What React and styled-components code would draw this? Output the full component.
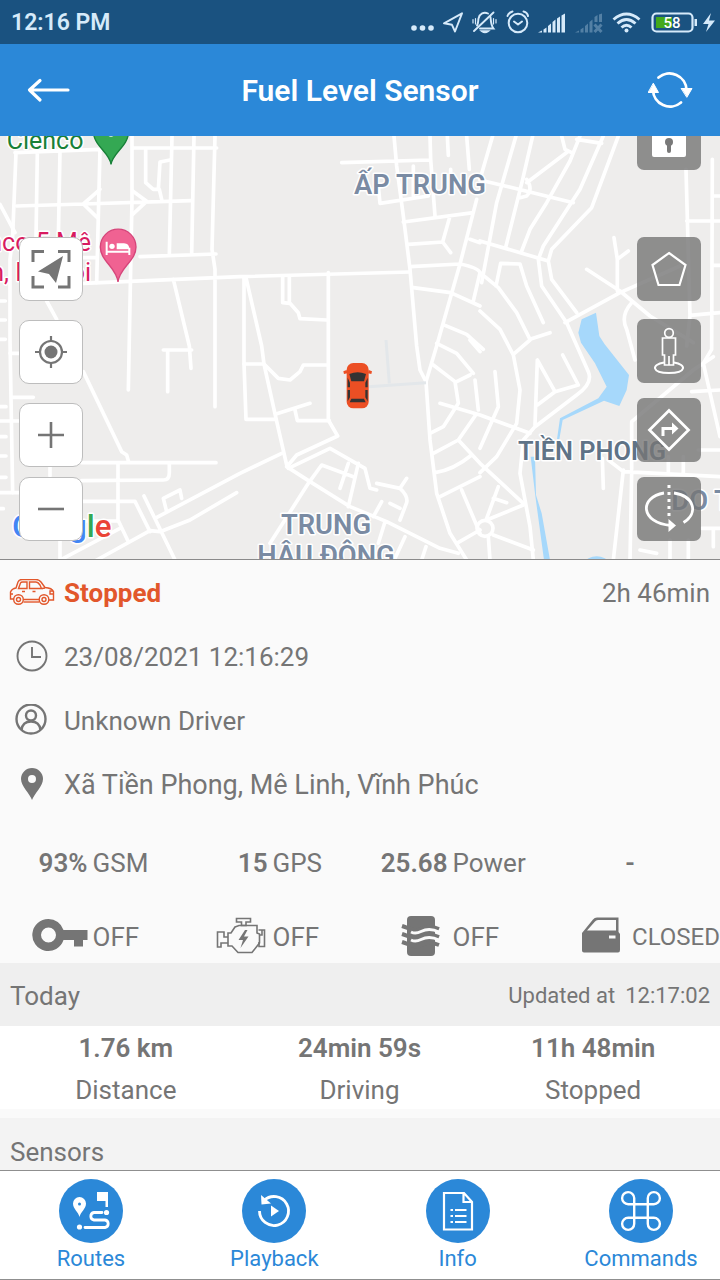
import React from 'react';
import styled, { createGlobalStyle } from 'styled-components';

const GlobalStyle = createGlobalStyle`
  * {
    box-sizing: border-box;
  }
  body {
    margin: 0;
    background: #fafafa;
    font-family: Roboto, "Noto Sans", "Liberation Sans", sans-serif;
    color: #757575;
  }
  button {
    font: inherit;
    padding: 0;
    border: 0;
    background: none;
    cursor: pointer;
  }
  svg {
    display: block;
    flex-shrink: 0;
  }
`;

const Screen = styled.div`
  display: flex;
  flex-direction: column;
  height: 100vh;
  overflow: hidden;
`;

const StatusBar = styled.div`
  flex-shrink: 0;
  display: flex;
  align-items: center;
  justify-content: space-between;
  height: 44px;
  padding: 2px 4px 0 11px;
  background: #1a5280;
  color: #d6eafa;
`;

const Clock = styled.span`
  font-size: 23px;
  font-weight: 600;
  line-height: 28px;
`;

const StatusIcons = styled.div`
  display: flex;
  gap: 8px;
`;

const Header = styled.header`
  flex-shrink: 0;
  display: flex;
  align-items: center;
  justify-content: space-between;
  height: 92px;
  padding: 0 24px;
  background: #2b88d8;
  color: #fff;
`;

const HeaderButton = styled.button`
  width: 48px;
  height: 48px;
  color: #fff;
`;

const Title = styled.h1`
  margin: 0;
  padding-top: 2px;
  font-size: 30px;
  font-weight: 600;
  line-height: 36px;
`;

const MapArea = styled.section`
  position: relative;
  flex-shrink: 0;
  height: 424px;
  overflow: hidden;
  background: #eeedec;
  border-bottom: 1px solid #8a8a8a;
`;

const MapCanvas = styled.svg`
  width: 100%;
  height: 424px;
`;

const Roads = styled.g`
  fill: none;
  stroke: #fff;
  stroke-width: 11px;
  stroke-linecap: round;
  stroke-linejoin: round;
`;

const PlaceName = styled.text`
  font-size: ${(props) => props.$size || 82}px;
  font-weight: ${(props) => props.$weight || 600};
  fill: ${(props) => props.$color || '#7a8ba3'};
  stroke: #fff;
  stroke-width: 9px;
  stroke-linejoin: round;
  paint-order: stroke;
`;

const ToolColumn = styled.div`
  position: absolute;
  bottom: 18px;
  ${(props) => props.$side}: 19px;
  display: flex;
  flex-direction: column;
`;

const ToolGroup = styled.div`
  display: flex;
  flex-direction: column;
  gap: ${(props) => props.$gap}px;
  margin-bottom: ${(props) => props.$after || 0}px;
`;

const MapButton = styled.button`
  display: flex;
  align-items: center;
  justify-content: center;
  width: 64px;
  height: 64px;
  border-radius: ${(props) => (props.$dark ? 7 : 10)}px;
  border: ${(props) => (props.$dark ? '0' : '1px solid #bdbdbd')};
  background: ${(props) => (props.$dark ? 'rgba(118, 118, 117, 0.8)' : '#fff')};
  color: ${(props) => (props.$dark ? '#fff' : '#757575')};
`;

const Details = styled.main`
  flex: 1;
  min-height: 0;
  overflow: hidden;
  font-size: 26px;
  line-height: 32px;
`;

const InfoRow = styled.div`
  display: flex;
  align-items: center;
  height: 64px;
  padding: 2px 10px 0 0;
`;

const RowIcon = styled.span`
  display: flex;
  justify-content: center;
  width: 64px;
`;

const RowText = styled.span`
  flex: 1;
  color: ${(props) => (props.$alert ? '#e2572b' : 'inherit')};
  font-size: ${(props) => (props.$address ? 27 : 26)}px;
  font-weight: ${(props) => (props.$alert ? 700 : 400)};
`;

const Readings = styled.div`
  display: grid;
  grid-template-columns: repeat(4, 1fr);
  align-items: center;
  height: ${(props) => props.$height}px;
`;

const Reading = styled.div`
  display: grid;
  grid-template-columns: 1fr 1fr;
  align-items: center;
  column-gap: 5px;
`;

const ReadingValue = styled.strong`
  justify-self: end;
  font-weight: 600;
`;

const EmptyReading = styled.span`
  text-align: center;
  font-weight: 600;
`;

const SwitchIcon = styled.span`
  justify-self: end;
`;

const SwitchState = styled.span`
  font-size: ${(props) => (props.$compact ? 24 : 26)}px;
  white-space: nowrap;
`;

const SectionHead = styled.div`
  display: flex;
  align-items: center;
  justify-content: space-between;
  height: ${(props) => props.$height}px;
  padding: 2px 10px 0;
  background: ${(props) => props.$background};
`;

const SectionTitle = styled.h2`
  margin: 0;
  font-size: 26px;
  font-weight: 400;
`;

const Updated = styled.span`
  display: flex;
  gap: 10px;
  font-size: 22px;
`;

const Stats = styled.dl`
  display: grid;
  grid-template-columns: repeat(3, 1fr);
  margin: 0 0 9px;
  padding: 1px 10px 0 9px;
  height: 83px;
  background: #fff;
  text-align: center;
`;

const Stat = styled.div`
  display: flex;
  flex-direction: column-reverse;
  justify-content: flex-end;
  line-height: 42px;
`;

const StatValue = styled.dd`
  margin: 0;
  font-weight: 600;
`;

const NavBar = styled.nav`
  flex-shrink: 0;
  display: flex;
  justify-content: space-between;
  height: 110px;
  padding-left: 12px;
  background: #fff;
  border-top: 1px solid #8f8f8f;
  border-bottom: 1px solid #8f8f8f;
`;

const NavLink = styled.a`
  display: flex;
  flex-direction: column;
  align-items: center;
  width: 158px;
  padding-top: 8px;
  font-size: 22px;
  line-height: 32px;
  color: #2b88d8;
  text-decoration: none;
`;

const NavIcon = styled.span`
  display: flex;
  align-items: center;
  justify-content: center;
  width: 64px;
  height: 64px;
  border-radius: 50%;
  background: #2b88d8;
  color: #fff;
`;

const SignalBars = ({ off }) => (
  <svg width="29" height="28" viewBox="0 0 29 28" fill="currentColor" opacity={off ? 0.3 : 1}>
    <path d="M1 23.5L5 21.5V23.5ZM6.5 20.5L9.5 18.5V23.5H6.5ZM11 17L14 14.5V23.5H11Z" />
    {off ? (
      <>
        <path d="M15.5 13L18.5 10.5V23.5H15.5ZM20.5 8L23.5 6V13H20.5ZM25 5.5L28 4.5V13H25Z" />
        <path d="M20.5 15.5L27.5 23M27.5 15.5L20.5 23" stroke="currentColor" strokeWidth="3" />
      </>
    ) : (
      <path d="M15.5 13L18.5 10.5V23.5H15.5ZM20 9.5L23 7.5V23.5H20ZM24.5 6.5L28 4.5V23.5H24.5Z" />
    )}
  </svg>
);

const PhoneStatus = () => (
  <StatusIcons>
    <svg width="24" height="28" viewBox="0 0 24 28" fill="currentColor">
      <circle cx="4" cy="19" r="2.8" />
      <circle cx="12.5" cy="19" r="2.8" />
      <circle cx="21" cy="19" r="2.8" />
    </svg>
    <svg width="21" height="28" viewBox="0 0 21 28" fill="none" stroke="currentColor" strokeWidth="1.9" strokeLinejoin="round">
      <path d="M2 14.3L20 4.3L13 22.5L10 15.8Z" />
    </svg>
    <svg width="26" height="28" viewBox="0 1 26 28" fill="none" stroke="currentColor" strokeWidth="1.9" strokeLinecap="round">
      <path d="M6 17.5C7.5 15 7 13 7.5 10.5C8.5 5.5 13 3.5 17 5.5" />
      <path d="M19.5 9C20 13 19.8 17 22.5 20.5H9" />
      <path d="M3 23L22.5 4.5" />
      <path d="M11 23.2Q14 25.5 17 23.2Z" fill="currentColor" />
      <path d="M4.500 10.5V16M2 11.500V15M22.500 10.500V16M25 11.500V15" strokeWidth="1.2" />
    </svg>
    <svg width="24" height="28" viewBox="0 1 24 28" fill="none" stroke="currentColor" strokeWidth="2" strokeLinecap="round" strokeLinejoin="round">
      <circle cx="13" cy="15" r="9.3" />
      <path d="M9 13.5L13 16.5L17 13.5" />
      <path d="M2.5 8Q3.5 4.5 7.5 3.5M23 8Q22.500 4.5 18.5 3.500" />
    </svg>
    <SignalBars />
    <SignalBars off />
    <svg width="31" height="28" viewBox="0 0 31 28" fill="none" stroke="currentColor" strokeWidth="2.9">
      <path d="M2.5 10.5Q15.5 -.5 28.5 10.5" />
      <path d="M6.5 14.5Q15.5 6.5 24.5 14.5" />
      <path d="M10.5 18.5Q15.5 14 20.5 18.5" />
      <circle cx="15.5" cy="21.5" r="2" fill="currentColor" stroke="none" />
    </svg>
    <svg width="66" height="28" viewBox="0 1 66 28">
      <rect x="2.5" y="5.500" width="40" height="18" rx="4" fill="none" stroke="currentColor" strokeWidth="2.2" />
      <rect x="6" y="9" width="16" height="11" fill="#43a91b" />
      <rect x="44.5" y="11" width="2.5" height="7" fill="currentColor" />
      <path d="M61 5L53 16H58.5L56 24L65 12.5H59Z" fill="currentColor" />
      <text x="22" y="20" textAnchor="middle" fontSize="15" fontWeight="500" fill="#fff">58</text>
    </svg>
  </StatusIcons>
);

const MapDrawing = () => (
  <MapCanvas viewBox="0 0 2160 1272" preserveAspectRatio="xMidYMid slice" role="img" aria-label="Map">
    <g fill="#a6d8fb">
      <path d="M1745 550L1788 530L1798 600L1814 625L1887 717L1880 762L1858 810L1812 794L1688 852L1678 910H1671L1680 847L1795 787L1820 752L1785 682L1743 620L1735 590Z" />
      <path d="M1592 962H1605L1608 1077L1625 1132L1650 1272H1632L1606 1080Z" />
      <ellipse cx="1790" cy="1277" rx="32" ry="16" />
    </g>
    <Roads>
      {/* north-west blocks */}
      <path d="M45 50L300 40M400 36H650M48 50L38 300L30 370V612L38 1070M112 50L108 310M180 45L175 310M300 40L290 440M396 0V190L385 762" />
      <path d="M50 210L250 204L575 194M300 160L250 204L292 245M398 165L440 196L398 235M437 40V140L460 160H478L485 190M510 72L480 78L475 160" />
      <path d="M516 0L508 355M582 0L575 355M645 0L636 340L645 400V812M420 362L648 354M250 442L720 422L1230 408M520 430L568 630L573 697M0 205L45 290M140 495L170 550M250 365H290" />
      <path d="M0 495H16M0 552H16M0 610H16M38 784H100M0 855H58M0 812H18M0 902H18M0 960H18M0 1024H18M0 1070H58M30 652H58M0 1118H10" />
      {/* south-west blocks */}
      <path d="M490 642H575M503 642V767M250 707L365 947L380 957L386 978M245 980H648M150 992V1020M508 984V1010Q508 1032 490 1032L245 1034M354 984V1152L385 1217M245 1096H405L450 1187" />
      <path d="M432 1080L525 1272M180 1212V1272M190 1267L360 1177M290 1272L450 1184L480 1187L570 1152L710 1070M465 1147L720 1012L845 952M500 1127L490 1087L540 1062L545 1087M250 1155H354" />
      {/* north centre */}
      <path d="M1025 80L1290 72M1182 0L1190 90L1210 240L1230 400L1250 630L1260 702L1278 737M1135 150L1140 202L1285 180M1290 0L1292 70L1305 240M1342 0L1345 58M1400 0L1408 100M1240 90V180M1352 100V150" />
      <path d="M1210 258L1420 230M1350 240L1328 318L1225 325M1328 318L1352 350M1230 392L1380 384Q1435 395 1440 410L1420 495M1430 190L1380 384L1310 630L1278 737M1410 310L1440 320M1240 455L1352 470L1440 510M1335 568L1400 595L1450 640" />
      <path d="M732 425V682L738 850H828M738 425L785 630L792 684L828 847L860 987M848 420V500L870 502L895 530L900 548L980 552M868 420V500M985 410V852L1013 900L890 957L865 987" />
      {/* south centre */}
      <path d="M732 684H792L835 727L870 732L900 707L910 687H982M828 834L930 802M885 822L892 854H988M865 997L990 937L1095 997L1110 1057L1130 1062" />
      <path d="M860 992L930 1037L1050 1112L1160 1157L1220 1187L1320 1237L1375 1252M810 1222L925 1042L965 987L1060 1022M1045 982L1020 1057M1075 982L1045 1112M1130 1042L1200 1057Q1225 1080 1220 1100L1200 1152M1200 1057L1220 1027M1170 1102L1200 1117M1145 1097L1120 1142M1155 1157L1135 1222M1215 1202L1185 1267M1278 1232L1265 1272" />
      <path d="M1278 737L1290 912L1310 1072L1350 1192L1400 1272M1310 622L1370 652L1420 712M1300 687L1365 737L1375 802L1330 872L1290 892M1370 737L1410 717M1320 802L1440 837L1590 892M1425 732L1435 822M1425 840L1375 912L1300 952M1375 912L1440 982L1570 1102M1415 957Q1360 1002 1305 1010M1440 1022L1320 1082M1385 1062L1440 1192M1370 1222L1440 1182M1410 612L1440 647" />
      {/* north-east blocks */}
      <path d="M1478 0L1440 130M1548 0L1490 200L1445 440M1598 0L1568 130L1518 330M1440 132L1515 150L1720 200M1685 0L1695 40L1715 50M1740 0L1710 75L1640 200L1590 280L1565 345M1730 10L1805 22M1580 140L1702 48M1580 130Q1600 160 1580 180L1560 185" />
      <path d="M1810 0L1740 160L1630 330L1615 370L1625 450L1700 560L1765 707Q1780 742 1730 777L1605 872L1570 912L1560 1012L1590 1172L1600 1272M1855 0L1775 215L1655 340L1645 375L1655 430L1730 530M1440 315L1645 375" />
      <path d="M1440 410L1495 455L1550 530L1590 610L1650 590M1488 450L1502 382L1560 384L1580 450L1630 560M1440 525L1500 580L1540 657L1560 762L1550 862L1490 962L1440 1010M1540 655L1590 612" />
      <path d="M1760 400L1860 465L1950 540L2080 620M1695 560L1860 470L2040 390M1842 305L1852 370V465M1852 370L1885 345M1895 500Q1860 540 1880 580L1905 672M2058 100L2070 540L2060 630M2137 70L2135 640L2110 682L2160 902M2060 255H2160M2137 180H2160M2137 388H2160M2070 538L2160 530" />
      {/* south-east blocks */}
      <path d="M1612 672L1605 867M1612 672L1665 767M1612 807L1665 767L1735 747L1688 657M1485 707L1495 812L1440 937M1495 1052L1460 1147M1480 1087L1520 1100M1460 1152L1570 1107M1480 1197L1600 1242M1465 1202L1470 1272" />
      <circle cx="1455" cy="1177" r="24" />
      <path d="M1807 967L1810 1057M1870 1002L1840 1272M1825 972L1870 1007L2160 1022M1895 1012L1890 1272M1895 1000V857L2080 702L2140 662M2075 767L2160 762M2095 942H2160M2005 962V1012M2050 962V1012M1920 1242L1970 1252M2010 1212V1272M2065 1212V1272M2105 1177H2160M2140 1182V1232" />
    </Roads>
    <path d="M1158 612L1168 742M1105 752L1278 740" fill="none" stroke="#e3e7ea" strokeWidth="9" />

    <path d="M333 85C330 50 280 30 280 -15A53 53 0 0 1 386 -15C386 30 338 50 333 85Z" fill="#34a853" stroke="#188038" strokeWidth="4" />
    <circle cx="333" cy="-12" r="14" fill="#fff" />
    <path d="M354 438C350 395 301 375 301 333A53 53 0 0 1 408 333C408 375 358 395 354 438Z" fill="#f06292" stroke="#d6457a" strokeWidth="4" />
    <path d="M320 317V357M320 347H388M388 357V335" stroke="#fff" strokeWidth="6" fill="none" />
    <path d="M350 340V322H372Q388 322 388 340Z" fill="#fff" />
    <circle cx="336" cy="331" r="8" fill="#fff" />
    <PlaceName x="20" y="38" $size={75} $weight={400} $color="#188038">Cienco</PlaceName>
    <PlaceName x="273" y="345" textAnchor="end" $size={75} $weight={400} $color="#d81b60">Cienco 5 Mê</PlaceName>
    <PlaceName x="273" y="435" textAnchor="end" $size={75} $weight={400} $color="#d81b60">Linh, Hà Nội</PlaceName>

    <PlaceName x="1260" y="175" textAnchor="middle">ẤP TRUNG</PlaceName>
    <PlaceName x="1776" y="972" textAnchor="middle" $size={76} $color="#5f7387">TIỀN PHONG</PlaceName>
    <PlaceName x="978" y="1194" textAnchor="middle">TRUNG</PlaceName>
    <PlaceName x="978" y="1288" textAnchor="middle">HẬU ĐÔNG</PlaceName>
    <PlaceName x="2014" y="1122">DO TH</PlaceName>
    <PlaceName x="36" y="1202" $size={94} $weight={500}>
      <tspan fill="#4285f4">G</tspan>
      <tspan fill="#ea4335">o</tspan>
      <tspan fill="#fbbc05">o</tspan>
      <tspan fill="#4285f4">g</tspan>
      <tspan fill="#34a853">l</tspan>
      <tspan fill="#ea4335">e</tspan>
    </PlaceName>

    {/* vehicle marker */}
    <g transform="translate(1030 680)">
      <path d="M10 22L0 26L2 34L12 32ZM76 22L86 26L84 34L74 32Z" fill="#ec4f24" />
      <rect x="10" y="1" width="66" height="136" rx="20" fill="#ec4f24" />
      <path d="M18 34Q43 24 68 34L62 56H24Z" fill="#333" />
      <path d="M13 45L20 60V74H13ZM73 45L66 60V74H73ZM13 82H20V104L13 116ZM73 82H66V104L73 116ZM24 108H62L67 119H19Z" fill="#333" />
    </g>
  </MapCanvas>
);

const MapTools = () => (
  <>
    <ToolColumn $side="left">
      <ToolGroup $gap={19} $after={10}>
        <MapButton aria-label="Fit vehicle">
          <svg width="40" height="40" viewBox="0 0 40 40" fill="none" stroke="currentColor" strokeWidth="3">
            <path d="M2 13V2.500H13M27 2.500H38V13M38 27V38H27M13 38H2V27" />
            <path d="M32 7L7 22.500L18 25L25 34Z" fill="currentColor" stroke="none" />
          </svg>
        </MapButton>
        <MapButton aria-label="My location">
          <svg width="34" height="34" viewBox="0 0 34 34" fill="none" stroke="currentColor" strokeWidth="2.200">
            <circle cx="17" cy="17" r="11" />
            <circle cx="17" cy="17" r="6.500" fill="currentColor" stroke="none" />
            <path d="M17 1V6M17 28V33M1 17H6M28 17H33" />
          </svg>
        </MapButton>
        <MapButton aria-label="Zoom in">
          <svg width="26" height="26" viewBox="0 0 26 26" stroke="currentColor" strokeWidth="2.600">
            <path d="M13 0V26M0 13H26" />
          </svg>
        </MapButton>
      </ToolGroup>
      <MapButton aria-label="Zoom out">
        <svg width="26" height="26" viewBox="0 0 26 26" stroke="currentColor" strokeWidth="2.600">
          <path d="M0 13H26" />
        </svg>
      </MapButton>
    </ToolColumn>
    <ToolColumn $side="right">
      <ToolGroup $gap={67} $after={18}>
        <MapButton $dark aria-label="Lock">
          <svg width="40" height="52" viewBox="0 0 40 52" fill="none" stroke="currentColor">
            <path d="M11 24V14A8 8 0 0 1 27 14" strokeWidth="3" />
            <rect x="3" y="22" width="34" height="23" rx="2" fill="currentColor" stroke="none" />
            <circle cx="20" cy="30" r="4" fill="#797979" stroke="none" />
            <path d="M20 31V39" stroke="#797979" strokeWidth="4" strokeLinecap="round" />
          </svg>
        </MapButton>
        <MapButton $dark aria-label="Geofence">
          <svg width="36" height="36" viewBox="0 0 36 36" fill="none" stroke="currentColor" strokeWidth="2.200">
            <path d="M18 2L34.500 14L28.500 34H7.500L1.500 14Z" />
          </svg>
        </MapButton>
      </ToolGroup>
      <ToolGroup $gap={15}>
        <MapButton $dark aria-label="Street view">
          <svg width="34" height="48" viewBox="0 0 34 48" fill="none" stroke="currentColor" strokeWidth="1.700">
            <circle cx="17" cy="6" r="4.300" />
            <path d="M10.500 11H23.500V28H21.500V38H12.500V28H10.500ZM17 29V38" />
            <path d="M12 35.500C-1 37.500 -.5 46 17 46S35 37.500 22 35.500" strokeWidth="2" />
          </svg>
        </MapButton>
        <MapButton $dark aria-label="Directions">
          <svg width="44" height="44" viewBox="0 0 44 44" fill="none" stroke="currentColor" strokeWidth="2.800">
            <path d="M22 2.500L41.500 22L22 41.500L2.500 22Z" />
            <path d="M16 28V20.500H25" strokeWidth="3" />
            <path d="M25 14.500L31.500 20.500L25 26.500Z" fill="currentColor" stroke="none" />
          </svg>
        </MapButton>
        <MapButton $dark aria-label="Rotate view">
          <svg width="50" height="50" viewBox="0 0 50 50" fill="none" stroke="currentColor" strokeWidth="2.800">
            <path d="M20 9C-5 13 -4 39 27 41.500" />
            <path d="M30 9C50 12 55 29 39.500 38.500" />
            <path d="M24.500 35L32 41.500L24.500 48Z" fill="currentColor" stroke="none" />
            <path d="M25 1V32" strokeDasharray="3 4" strokeWidth="3" />
          </svg>
        </MapButton>
      </ToolGroup>
    </ToolColumn>
  </>
);

const CarIcon = () => (
  <svg width="46" height="28" viewBox="0 1 46 28" fill="none" stroke="#e2572b" strokeWidth="1.400">
    <path d="M5 21H1.500V14Q3 10.500 7 10L9 4Q10 1.500 13 1.500H27Q30 1.500 32 4L36 9.500Q43 10 44.500 13.500V22H40M14.500 21.500H30" />
    <path d="M14.500 24H30" />
    <path d="M9.500 10.500L11.500 5Q12 4 13.500 4H18V10.500ZM20.500 4H27Q29 4 31 7L32.500 10.500H20.500Z" />
    <path d="M13 13.500H16M23.500 13.500H26.500M44 13H41V16H44M1.500 16H4M36 10L33 10.500" />
    <circle cx="9.500" cy="21.500" r="4.800" />
    <circle cx="9.500" cy="21.500" r="2" />
    <circle cx="35" cy="21.500" r="4.800" />
    <circle cx="35" cy="21.500" r="2" />
  </svg>
);

const ClockIcon = () => (
  <svg width="32" height="34" viewBox="0 0 32 34" fill="none" stroke="currentColor" strokeWidth="1.900">
    <circle cx="16" cy="16" r="14.500" />
    <path d="M16 7V17H25" />
  </svg>
);

const DriverIcon = () => (
  <svg width="34" height="34" viewBox="0 1 34 34" fill="none" stroke="currentColor" strokeWidth="2.400">
    <circle cx="16" cy="16" r="14.500" />
    <circle cx="16" cy="12.500" r="5" />
    <path d="M6.500 27Q7.500 18.500 16 18.500T25.500 27" />
  </svg>
);

const PlaceIcon = () => (
  <svg width="24" height="36" viewBox="0 0 24 36" fill="currentColor" fillRule="evenodd">
    <path d="M12 33C10 27 1 19 1 12A11 11 0 0 1 23 12C23 19 14 27 12 33ZM12 16A4 4 0 1 0 12 8A4 4 0 0 0 12 16Z" />
  </svg>
);

const KeyIcon = () => (
  <svg width="56" height="40" viewBox="0 1 56 40" fill="currentColor" fillRule="evenodd">
    <path d="M16.500 3A16 16 0 0 1 31.500 14H55.500V24H51V30.500H42V24H31.500A16 16 0 1 1 16.500 3ZM16.500 26.500A7.500 7.500 0 1 0 16.500 11.500A7.500 7.500 0 0 0 16.500 26.500Z" />
  </svg>
);

const EngineIcon = () => (
  <svg width="56" height="40" viewBox="-4 1 56 40" fill="none" stroke="currentColor" strokeWidth="1.600">
    <path d="M19 11L23 9.500H41V17L43.500 18V27L36 36.500H22L16 30H12V17H15Z" />
    <path d="M20.500 2.500H34.500V6H30V9.500H25.500V6H20.500ZM12 21H8V16H1.500V31H5V27H12M43.500 19H46V14H42.500M46 14H48.500V30.500H43V26" />
    <path d="M29 14L22.500 24H27L24.500 32L32.500 20.500H28L31.500 14Z" fill="currentColor" stroke="none" />
  </svg>
);

const WaterIcon = () => (
  <svg width="56" height="42" viewBox="-1 2 56 42">
    <rect x="14" y="2" width="28" height="40" rx="4" fill="currentColor" />
    <g fill="none" strokeWidth="4">
      <path d="M9 12C18 15 22 18 28 15S38 12 46 15" stroke="currentColor" />
      <path d="M9 20C18 23 22 26 28 23S38 20 46 23M9 28C18 31 22 34 28 31S38 28 46 31" stroke="currentColor" />
      <path d="M18 18C22 20 25 19 28 17.500S38 14 46 18M18 26C22 28 25 27 28 25.500S38 22 46 26" stroke="#fafafa" strokeWidth="3" />
    </g>
  </svg>
);

const DoorIcon = () => (
  <svg width="56" height="40" viewBox="-2 3 56 40" fill="currentColor" fillRule="evenodd">
    <path d="M9 19L20 5.500Q21.500 3.500 24 3.500H45.500V18L47 20V36Q47 38.500 45 38.500H11Q9 38.500 9 36.500ZM14 16.500H43V6H25Q23 6 22 7.500ZM36 21.500V24.500H42.500V21.500Z" />
  </svg>
);

const RoutesIcon = () => (
  <svg width="44" height="44" viewBox="0 0 44 44" fill="none" stroke="currentColor" strokeWidth="2.800" strokeLinecap="round">
    <path d="M10.500 28C9.500 23 4 20 4 14.500A6.500 6.500 0 0 1 17 14.500C17 20 11.500 23 10.500 28Z" fill="currentColor" stroke="none" />
    <circle cx="10.500" cy="15" r="1.500" fill="#2b88d8" stroke="none" />
    <path d="M28 3H39V18H36.500V12H28Z" fill="currentColor" stroke="none" />
    <circle cx="37.500" cy="23.500" r="2.600" fill="currentColor" stroke="none" />
    <path d="M33 23.500H25A3.800 3.800 0 0 0 25 31H36A3.800 3.800 0 0 1 36 38.500H16" />
    <circle cx="10.500" cy="38" r="2.600" fill="currentColor" stroke="none" />
  </svg>
);

const PlaybackIcon = () => (
  <svg width="40" height="40" viewBox="0 0 40 40" fill="none" stroke="currentColor" strokeWidth="2.800">
    <path d="M5.500 20A14.500 14.500 0 1 0 10 9.500" />
    <path d="M7 4L7.500 13.500L17 12.500Z" fill="currentColor" stroke="none" />
    <path d="M17 14.500L25 20L17 25.500Z" fill="currentColor" stroke="none" />
  </svg>
);

const InfoIcon = () => (
  <svg width="40" height="40" viewBox="0 0 40 40" fill="none" stroke="currentColor" strokeWidth="2.200">
    <path d="M6 2H26L34 11V38.500H6ZM25.500 2V11H34" />
    <path d="M17 19H28.500M17 25H28.500M17 31H28.500M12.500 19H15M12.500 25H15M12.500 31H15" />
  </svg>
);

const CommandIcon = () => (
  <svg width="44" height="44" viewBox="0 0 24 24" fill="none" stroke="currentColor" strokeWidth="1.300">
    <path d="M8.300 15.700V4.900A3.300 3.300 0 1 0 5 8.300H19A3.300 3.300 0 1 0 15.700 5V19A3.300 3.300 0 1 0 19 15.700H5A3.300 3.300 0 1 0 8.300 19Z" />
  </svg>
);

const vehicleInfo = [
  { icon: <ClockIcon />, text: '23/08/2021 12:16:29' },
  { icon: <DriverIcon />, text: 'Unknown Driver' },
  { icon: <PlaceIcon />, text: 'Xã Tiền Phong, Mê Linh, Vĩnh Phúc', address: true },
];

const readings = [
  { value: '93%', label: 'GSM' },
  { value: '15', label: 'GPS' },
  { value: '25.68', label: 'Power' },
];

const switches = [
  { id: 'key', icon: <KeyIcon />, state: 'OFF' },
  { id: 'engine', icon: <EngineIcon />, state: 'OFF' },
  { id: 'air', icon: <WaterIcon />, state: 'OFF' },
  { id: 'door', icon: <DoorIcon />, state: 'CLOSED', compact: true },
];

const stats = [
  { value: '1.76 km', label: 'Distance' },
  { value: '24min 59s', label: 'Driving' },
  { value: '11h 48min', label: 'Stopped' },
];

const navItems = [
  { label: 'Routes', icon: <RoutesIcon /> },
  { label: 'Playback', icon: <PlaybackIcon /> },
  { label: 'Info', icon: <InfoIcon /> },
  { label: 'Commands', icon: <CommandIcon /> },
];

const App = () => (
  <>
    <GlobalStyle />
    <Screen>
      <StatusBar>
        <Clock>12:16 PM</Clock>
        <PhoneStatus />
      </StatusBar>
      <Header>
        <HeaderButton aria-label="Back">
          <svg width="48" height="48" viewBox="0 0 48 48" fill="none" stroke="currentColor" strokeWidth="3.200" strokeLinecap="round" strokeLinejoin="round">
            <path d="M44 24H5.500M16 14.500L5.500 24L16 34" />
          </svg>
        </HeaderButton>
        <Title>Fuel Level Sensor</Title>
        <HeaderButton aria-label="Refresh">
          <svg width="48" height="48" viewBox="3 0 48 48" fill="none" stroke="currentColor" strokeWidth="2.800" strokeLinecap="round">
            <path d="M13.500 11.500A17 17 0 0 1 41.500 24" />
            <path d="M36 36.500A17 17 0 0 1 8 24" />
            <path d="M36.500 22.500H47L42 31ZM3.500 26.500H13.500L8.500 17.500Z" fill="currentColor" strokeWidth="1" strokeLinejoin="round" />
          </svg>
        </HeaderButton>
      </Header>
      <MapArea>
        <MapDrawing />
        <MapTools />
      </MapArea>
      <Details>
        <InfoRow>
          <RowIcon><CarIcon /></RowIcon>
          <RowText $alert>Stopped</RowText>
          <span>2h 46min</span>
        </InfoRow>
        {vehicleInfo.map((row) => (
          <InfoRow key={row.text}>
            <RowIcon>{row.icon}</RowIcon>
            <RowText $address={row.address}>{row.text}</RowText>
          </InfoRow>
        ))}
        <Readings $height={94}>
          {readings.map((reading) => (
            <Reading key={reading.label}>
              <ReadingValue>{reading.value}</ReadingValue>
              <span>{reading.label}</span>
            </Reading>
          ))}
          <EmptyReading>-</EmptyReading>
        </Readings>
        <Readings $height={53}>
          {switches.map((item) => (
            <Reading key={item.id}>
              <SwitchIcon>{item.icon}</SwitchIcon>
              <SwitchState $compact={item.compact}>{item.state}</SwitchState>
            </Reading>
          ))}
        </Readings>
        <SectionHead $height={63} $background="#efefef">
          <SectionTitle>Today</SectionTitle>
          <Updated>
            <span>Updated at</span>
            <time>12:17:02</time>
          </Updated>
        </SectionHead>
        <Stats>
          {stats.map((stat) => (
            <Stat key={stat.label}>
              <dt>{stat.label}</dt>
              <StatValue>{stat.value}</StatValue>
            </Stat>
          ))}
        </Stats>
        <SectionHead $height={66} $background="#f3f3f3">
          <SectionTitle>Sensors</SectionTitle>
        </SectionHead>
      </Details>
      <NavBar>
        {navItems.map((item) => (
          <NavLink key={item.label} href={`#${item.label.toLowerCase()}`}>
            <NavIcon>{item.icon}</NavIcon>
            {item.label}
          </NavLink>
        ))}
      </NavBar>
    </Screen>
  </>
);

export default App;
